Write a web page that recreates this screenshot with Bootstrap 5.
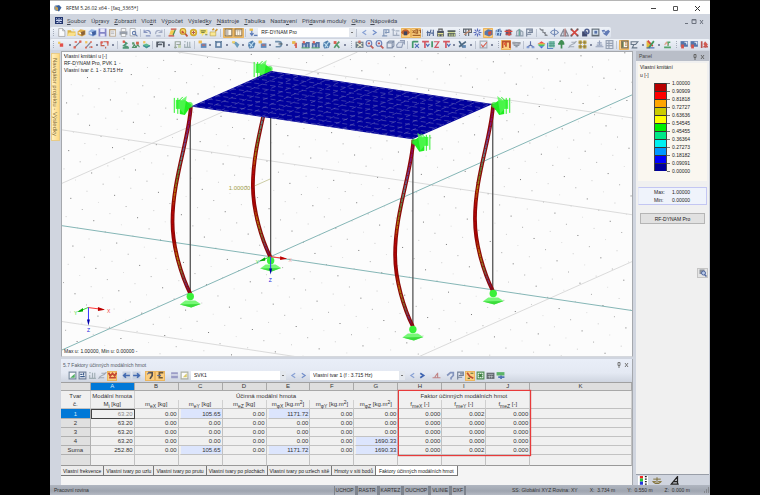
<!DOCTYPE html>
<html lang="cs">
<head>
  <meta charset="UTF-8">
  <meta name="viewport" content="width=device-width, initial-scale=1">
  <title>RFEM 5.26.02 x64 - [faq_3365*]</title>
  <link href="https://cdn.jsdelivr.net/npm/bootstrap@5.3.0/dist/css/bootstrap.min.css" rel="stylesheet">
  <style>
    body { background: #000; font: 5px/8px "Liberation Sans", Arial, sans-serif; color: #222; }
    button, select { font: inherit; color: inherit; padding: 0; border: 0; background: none; }
    svg { display: block; }
    .app { margin: 0 50px; background: #d0d5df; }
    .titlebar { height: 14px; background: #fff; border-top: 1px solid #b5b5b5; font-family: "Open Sans", sans-serif; }
    .titlebar button { width: 10px; height: 10px; }
    .menubar { height: 13px; padding: 0 5px; }
    .menubar a { color: #444a55; font-size: 6px; font-family: Roboto, sans-serif; }
    .menubar nav { gap: 5px; }
    .toolbar { height: 12px; }
    .toolbar-strip { background: linear-gradient(#eff3f9, #d9dfea); border-radius: 2px; height: 11px; }
    .strip-main { width: 85%; }
    .tool { flex: 10 1 0; min-width: 0; height: 10px; border-radius: 1px; }
    .tool svg, .dock-tool svg { width: 9px; height: 9px; margin: auto; opacity: .85; }
    .tool-on { background: #fbce80; box-shadow: inset 0 0 0 1px #ebb55e; }
    .tool-dd { flex: 6 1 0; min-width: 0; }
    .tool-dd::after { content: ""; display: block; width: 2px; height: 2px; margin: auto; background: #8189a0; }
    .tool-sep { flex: 4 1 0; height: 8px; background: linear-gradient(90deg, transparent 1px, #bcc3d0 1px, #bcc3d0 2px, transparent 2px); }
    .tool-grip { flex: 6 1 0; height: 7px; background: repeating-linear-gradient(#a5acba 0 1px, transparent 1px 2px) 3px 0 / 1px 100% no-repeat; }
    .combo { height: 9px; background: #fff; position: relative; }
    .combo select { appearance: none; width: 100%; height: 9px; padding-left: 3px; line-height: 9px; display: block; }
    .combo::after { content: ""; position: absolute; right: 0; top: 0; width: 6px; height: 9px; background: linear-gradient(#777, #777) 2px 4px / 2px 1px no-repeat #e4e8ee; pointer-events: none; }
    .toolbar .combo { flex: 94 1 0; }
    .rail { width: 11px; }
    .rail button { width: 9px; height: 88px; margin: 2px 0 0 1px; writing-mode: vertical-rl; font-size: 6px; line-height: 9px; color: #806a3a; background: linear-gradient(90deg, #fff0c0, #ffd980); border: 1px solid #e8cc88; }
    .view { background: #fcfcfc; border: 1px solid #a5a8ad; border-bottom-color: #d5d8dd; position: relative; }
    .view-caption { position: absolute; left: 2px; top: 1px; line-height: 7px; }
    .view-limits { position: absolute; left: 2px; bottom: 1px; }
    .side { width: 74px; margin-left: 3px; background: #f0f0f0; border-right: 1px solid #c5cad5; }
    .side-head { height: 10px; background: #b9bec8; padding: 0 3px; color: #444; }
    .side-scale { background: #faf7f0; margin: 2px; padding: 0 2px 3px 2px; height: 118px; }
    .swatches { width: 13px; margin: 4px 0 4px 14px; border: 1px solid #444; border-width: 0 1px; }
    .swatches div { height: 8px; border-top: 1px solid #333; }
    .ticks div { height: 8px; padding-left: 5px; background: linear-gradient(#777, #777) 0 4px / 3px 1px no-repeat; }
    .side-limits { background: #eff3fb; border: 1px solid #c3c6f2; border-left-color: #e5e8f5; margin: 4px 2px 0; height: 18px; padding-left: 15px; }
    .side-limits span { width: 18px; }
    .side .side-action { background: #e1e1e1; border: 1px solid #b5b5b5; height: 11px; margin: 8px 4px 0; }
    .side .side-zoom { width: 11px; height: 10px; margin: 44px 1px 0 auto; background: #e4e4e4; border: 1px solid #c5c5c5; }
    .side-zoom svg { width: 8px; height: 8px; margin: auto; }
    .side-tabs { height: 11px; background: #d0d5df; border-top: 1px solid #999ea8; gap: 4px; padding: 0 2px; }
    .side-tabs button { width: 10px; height: 9px; }
    .dock { background: #f0f0f0; margin-top: 2px; border-right: 1px solid #a5a8ad; }
    .dock-head { height: 24px; background: linear-gradient(#e9eef8, #e4e9f3 60%, #cfd5e0); padding: 0 2px; color: #555b66; border-bottom: 1px solid #a0a0a0; }
    .dock-title { font-size: 5px; height: 11px; }
    .dock-tools { height: 11px; }
    .dock-tool { width: 10px; height: 10px; }
    .dock-gap { width: 4px; }
    .dock-tools .combo { width: 95px; margin: 0 2px; color: #222; }
    .modal-grid { table-layout: fixed; --bs-table-bg: transparent; color: #333; font-size: 6px; line-height: 8px; border-collapse: separate; border-spacing: 0; }
    .modal-grid > :not(caption) > * > * { padding: 0 1px; height: 9px; border: 0 solid #c2c2c2; border-width: 0 1px 1px 0; color: inherit; font-weight: normal; text-align: right; white-space: nowrap; box-shadow: none; vertical-align: middle; }
    .modal-grid > thead > tr > * { text-align: center; overflow: visible; }
    .modal-grid > thead > .letters > * { height: 8px; line-height: 7px; background: #dedede; border-color: #a8a8a8; }
    .modal-grid > thead > .heads > * { border-bottom: 0; background: #f0f0f0; border-color: #d0d0d0; }
    .modal-grid > thead > .units > * { border-bottom: 1px solid #c0c0c0; }
    .modal-grid > tbody > tr > th { text-align: center; background: #e0e0e0; border-color: #b0b0b0; }
    .modal-grid > thead > tr > .picked, .modal-grid > tbody > tr > .picked { background: #0078d7; color: #d5e9fa; }
    .modal-grid > tbody > tr > .cursor { border: 1px solid #444; color: #888; }
    .modal-grid > tbody > tr > .hit { background: #dce5fd; border-left: 2px solid #f0f0f0; }
    .modal-grid > tbody > .blank > * { height: 11px; border-bottom-color: #999; }
    .modal-grid sub, .modal-grid sup { font-size: 5px; line-height: 0; }
    .callout { position: absolute; left: 59%; width: 23.3%; top: 7px; height: 66px; border: 1px solid #e83a3a; box-shadow: 0 0 1px #e83a3a; pointer-events: none; }
    .sheet-tabs { height: 19px; background: #f4f4f4; }
    .sheet-tabs button { height: 10px; padding: 0 2px; border-right: 1px solid #777; border-bottom: 1px solid #777; background: #ececec; white-space: nowrap; }
    .sheet-tabs .current { background: #fff; padding: 0 3px; }
    .statusbar { height: 10px; background: linear-gradient(#b0b6c0, #9fa5b0 60%, #b5bac4); color: #333; }
    .statusbar button { padding: 0 1px; border: 1px solid #7d838d; border-width: 0 2px 0 1px; font-size: 5px; height: 9px; }
    .status-place { width: 30%; margin-left: 46px; white-space: nowrap; }
  </style>
</head>
<body>
  <div class="app d-flex flex-column min-vh-100">

    <header>
      <div class="titlebar d-flex align-items-center">
        <svg class="ms-1 me-1" width="8" height="8" viewBox="0 0 16 16"><circle cx="6" cy="8" r="6" fill="#8aa0bd"/><path d="M3 6l7-4 5 5-5 8-6-3z" fill="#365f9c"/><path d="M2 5l6 2v7l-5-3z" fill="#c9a152"/></svg>
        <span>RFEM 5.26.02 x64 - [faq_3365*]</span>
        <div class="ms-auto d-flex gap-2 me-1 pe-1">
          <button aria-label="Minimalizovat" class="me-1"><svg viewBox="0 0 10 10"><path d="M3 5.500h5" stroke="#444"/></svg></button>
          <button aria-label="Maximalizovat" class="me-1"><svg viewBox="0 0 10 10"><path d="M3.500 3.500h4v4h-4z" fill="none" stroke="#555"/></svg></button>
          <button aria-label="Zavřít"><svg viewBox="0 0 10 10"><path d="M3 3l5 5M8 3l-5 5" stroke="#333"/></svg></button>
        </div>
      </div>
      <div class="menubar d-flex align-items-center">
        <svg class="me-1" width="8" height="7" viewBox="0 0 16 14"><rect width="16" height="14" fill="#23366f"/><path d="M2 7h12M8 2v10M2 3l3 2M14 3l-3 2M3 11h3M10 11h3" stroke="#c7d2f0" stroke-width="2"/></svg>
        <nav class="d-flex">
          <a class="nav-link p-0" href="#"><u>S</u>oubor</a>
          <a class="nav-link p-0" href="#">Úp<u>r</u>avy</a>
          <a class="nav-link p-0" href="#"><u>Z</u>obrazit</a>
          <a class="nav-link p-0" href="#">Vlo<u>ž</u>it</a>
          <a class="nav-link p-0" href="#">V<u>ý</u>počet</a>
          <a class="nav-link p-0" href="#">Výsled<u>k</u>y</a>
          <a class="nav-link p-0" href="#"><u>N</u>ástroje</a>
          <a class="nav-link p-0" href="#"><u>T</u>abulka</a>
          <a class="nav-link p-0" href="#">Nasta<u>v</u>ení</a>
          <a class="nav-link p-0" href="#">Pří<u>d</u>avné moduly</a>
          <a class="nav-link p-0" href="#"><u>O</u>kno</a>
          <a class="nav-link p-0" href="#"><u>N</u>ápověda</a>
        </nav>
        <svg class="ms-auto" width="22" height="8" viewBox="0 0 22 8"><path d="M2 6.500h3M9 6.500v-4h4v4zM9 3h4M17 3l3 4M20 3l-3 4" fill="none" stroke="#6c727e"/></svg>
      </div>
      <div class="toolbar"><div class="toolbar-strip strip-main d-flex align-items-center" id="tools-main"></div></div>
      <div class="toolbar"><div class="toolbar-strip d-flex align-items-center" id="tools-view"></div></div>
    </header>

    <main class="d-flex flex-grow-1">
      <aside class="rail flex-shrink-0"><button>Navigátor projektu - Výsledky</button></aside>

      <div class="d-flex flex-column flex-grow-1">
        <section class="view">
          <svg id="scene" class="w-100" viewBox="62 52 571 305" role="img" aria-label="Vlastní tvar konstrukce">
            <defs>
              <linearGradient id="mode" x1="0" y1="0" x2="0" y2="1">
                <stop offset="0" stop-color="#8a0630"/><stop offset=".08" stop-color="#8b0a70"/><stop offset=".2" stop-color="#6a4a9a"/>
                <stop offset=".28" stop-color="#5d9090"/><stop offset=".37" stop-color="#63882a"/><stop offset=".46" stop-color="#bb7a00"/>
                <stop offset=".54" stop-color="#bc0404"/><stop offset=".72" stop-color="#b00000"/><stop offset=".8" stop-color="#bb7a00"/>
                <stop offset=".88" stop-color="#7c7430"/><stop offset=".95" stop-color="#703070"/><stop offset="1" stop-color="#800020"/>
              </linearGradient>
              <g id="col" fill="none">
                <path d="M190.500 107V294" stroke="#555" stroke-width="1.300"/>
                <path d="M191 107C189 140 172.700 180 172.700 222C172.700 248 182 277 190.500 294" stroke="#8c0808" stroke-width="3.800"/>
                <path d="M191 107C189 140 172.700 180 172.700 222C172.700 248 182 277 190.500 294" stroke="url(#mode)" stroke-width="1.400" stroke-dasharray="4 .6"/>
              </g>
              <g id="foot">
                <path d="M-10.500 8L-5 4H5L10.500 7.500L1 11z" fill="#77f877"/><path d="M-10.500 8L10.500 7.500L1 11z" fill="#3bdc3b"/>
                <circle r="3.700" fill="#39f039"/>
              </g>
              <g id="bearing">
                <path d="M0 0l7-5 5 1V9l-5 1z" fill="#1fee1f"/><path d="M5-9l7 5v8l-4 5z" fill="#54f754" opacity=".8"/>
                <path d="M11-5h5v9h-5z" fill="#4cf64c"/><path d="M14-7V9M17.500-7V8M9-8l4 4" stroke="#2cf22c"/>
                <circle cx="2" cy="0" r="3" fill="#2fe52f" opacity=".7"/>
              </g>
            </defs>
            <g id="dots"></g>
            <g stroke="#d2d2d2" stroke-width=".8">
              <path d="M178 52L633 118M62 130L633 215M61 184L358 52M62 322L295 357M420 357L633 262"/>
            </g>
            <path d="M62 226L633 311M62 350.500L633 95" stroke="#77adad" stroke-width=".9"/>
            <path d="M253 187l18-8" stroke="#cccca5"/>
            <use href="#col" x="80.500" y="-36"/>
            <use href="#bearing" transform="translate(272 69) scale(-1 1)"/>
            <path d="M191 106.500L271.500 71L493.500 104L413 139.500z" fill="#00009c"/>
            <g id="mesh" stroke="#7474b8" stroke-width=".5" stroke-dasharray="5 3"></g>
            <use href="#col"/><use href="#col" x="223" y="33"/><use href="#col" x="303" y="-3"/>
            <use href="#bearing" transform="translate(192 105) scale(-1 1)"/>
            <use href="#bearing" transform="translate(493 105)"/>
            <use href="#bearing" transform="translate(413 142)"/>
            <use href="#foot" x="190.500" y="297"/><use href="#foot" x="271" y="261"/>
            <use href="#foot" x="413.500" y="330"/><use href="#foot" x="494" y="294"/>
            <g id="axes">
              <path d="M88 308l16 2" stroke="#f33"/><path d="M98 307.500l7 2.700-7 1.200z" fill="#b00"/>
              <path d="M88 308l-9 4" stroke="#3d3"/><path d="M83 308.500l-6 4 6-.500z" fill="#0a0"/>
              <path d="M88.500 308v13" stroke="#33f"/><path d="M87 320h3l-1.500 6z" fill="#00a"/>
            </g>
            <use href="#axes" x="182.500" y="-51"/>
            <g font-size="5">
              <text x="107" y="313" fill="#e44">X</text><text x="74" y="315" fill="#3d3">Y</text><text x="87" y="333" fill="#22d">Z</text>
              <text x="289" y="262" fill="#e99">X</text><text x="256" y="264" fill="#3d3">Y</text><text x="269" y="282" fill="#22d">Z</text>
            </g>
            <text x="229" y="190" font-size="6" fill="#a0a04a">1.00000</text>
          </svg>
          <div class="view-caption">Vlastní kmitání u [-]<br>RF-DYNAM Pro, PVK 1<br>Vlastní tvar č. 1 - 3.715 Hz</div>
          <div class="view-limits">Max u: 1.00000, Min u: 0.00000 -</div>
        </section>

        <section class="dock flex-grow-1">
          <div class="dock-head">
            <div class="dock-title d-flex align-items-center justify-content-between">
              <span>5.7 Faktory účinných modálních hmot</span>
              <svg width="14" height="7" viewBox="0 0 14 7"><path d="M2 1.500h2v3h-2zM3 4v3M9 2l3 4M12 2l-3 4" fill="none" stroke="#777"/></svg>
            </div>
            <div class="dock-tools d-flex align-items-center" id="tools-dock"></div>
          </div>
          <div class="position-relative">
            <table class="table modal-grid mb-0">
              <colgroup>
                <col style="width:5.200%"><col span="10" style="width:7.700%"><col>
              </colgroup>
              <thead>
                <tr class="letters"><th></th><th class="picked">A</th><th>B</th><th>C</th><th>D</th><th>E</th><th>F</th><th>G</th><th>H</th><th>I</th><th>J</th><th>K</th></tr>
                <tr class="heads"><th>Tvar</th><th>Modální hmota</th><th colspan="6">Účinná modální hmota</th><th colspan="3">Faktor účinných modálních hmot</th><th></th></tr>
                <tr class="heads units">
                  <th>č.</th><th>M<sub>i</sub> [kg]</th><th>m<sub>eX</sub> [kg]</th><th>m<sub>eY</sub> [kg]</th><th>m<sub>eZ</sub> [kg]</th>
                  <th>m<sub>φX</sub> [kg.m<sup>2</sup>]</th><th>m<sub>φY</sub> [kg.m<sup>2</sup>]</th><th>m<sub>φZ</sub> [kg.m<sup>2</sup>]</th>
                  <th>f<sub>meX</sub> [-]</th><th>f<sub>meY</sub> [-]</th><th>f<sub>meZ</sub> [-]</th><th></th>
                </tr>
              </thead>
              <tbody id="modal-rows"></tbody>
            </table>
            <div class="callout"></div>
          </div>
          <div class="sheet-tabs d-flex align-items-start">
            <button>Vlastní frekvence</button><button>Vlastní tvary po uzlu</button><button>Vlastní tvary po prutu</button><button>Vlastní tvary po plochách</button><button>Vlastní tvary po uzlech sítě</button><button>Hmoty v síti bodů</button><button class="current">Faktory účinných modálních hmot</button>
          </div>
        </section>
      </div>

      <aside class="side flex-shrink-0 d-flex flex-column">
        <div class="side-head d-flex align-items-center justify-content-between">
          <span>Panel</span>
          <svg width="14" height="7" viewBox="0 0 14 7"><path d="M2 1.500h2v3h-2zM3 4v3M9 2l3 4M12 2l-3 4" fill="none" stroke="#666"/></svg>
        </div>
        <div class="side-scale">
          <div>Vlastní kmitání</div>
          <div>u [-]</div>
          <div class="d-flex"><div class="swatches" id="swatches"></div><div class="ticks" id="ticks"></div></div>
        </div>
        <div class="side-limits">
          <div class="d-flex"><span>Max:</span>1.00000</div>
          <div class="d-flex"><span>Min:</span>0.00000</div>
        </div>
        <button class="side-action">RF-DYNAM Pro</button>
        <button class="side-zoom" aria-label="Lupa"><svg viewBox="0 0 16 16"><rect x="1" y="1" width="10" height="9" fill="#8a8f98"/><circle cx="9" cy="8" r="4" fill="#b9c9e8" stroke="#5068a0" stroke-width="2"/><path d="M11 11l4 4" stroke="#5068a0" stroke-width="3"/></svg></button>
        <div class="side-tabs d-flex align-items-center mt-auto">
          <button class="bg-white" aria-label="Barevná stupnice"><svg viewBox="0 0 16 14"><path d="M3 0h5v4H3z" fill="#e22"/><path d="M3 4h5v5H3z" fill="#2c3"/><path d="M3 9h5v5H3z" fill="#23d"/><path d="M11 1h3M11 5h3M11 9h3M11 13h3" stroke="#222" stroke-width="2"/></svg></button>
          <button aria-label="Faktory"><svg viewBox="0 0 16 14"><path d="M2 5h12M8 2v10M4 12h8M1 9a3 3 0 0 0 5 0zM10 9a3 3 0 0 0 5 0z" fill="#d8bd60" stroke="#7d6d35" stroke-width="1.500"/></svg></button>
          <button class="ms-1" aria-label="Filtr"><svg viewBox="0 0 16 14"><path d="M2 13L12 1v12zM6 9h5M3 13h11" fill="#c5c8ce" stroke="#222" stroke-width="2"/></svg></button>
        </div>
      </aside>
    </main>

    <footer class="statusbar d-flex align-items-center">
      <span class="ps-1">Pracovní rovina</span>
      <div class="ms-auto d-flex">
        <button>UCHOP</button><button>RASTR</button><button>KARTEZ</button><button>OUCHOP</button><button>VLINIE</button><button>DXF</button>
      </div>
      <div class="status-place d-flex justify-content-between">
        <span>SS: Globální XYZ Rovina: XY</span><span>X: &nbsp;3.734 m</span><span>Y: &nbsp;0.550 m</span><span>Z: &nbsp;0.000 m</span>
        <svg width="8" height="8" viewBox="0 0 8 8"><path d="M6 2h1M4 4h1M6 4h1M2 6h1M4 6h1M6 6h1" stroke="#666"/></svg>
      </div>
    </footer>
  </div>

  <script src="https://cdn.jsdelivr.net/npm/bootstrap@5.3.0/dist/js/bootstrap.bundle.min.js"></script>
  <script>
    // 16x16 icon drawings: [attributes, path data] pairs
    const line = (color, w = 2) => `fill="none" stroke="${color}" stroke-width="${w}"`;
    const fill = color => `fill="${color}"`;
    const icons = {
      page: [['fill="#fff" stroke="#777"', 'M3 1h7l4 4v10H3zM10 1v4h4']],
      open: [[fill('#d9a825'), 'M1 4h6l1 2h7v8H1z'], [fill('#ffe07a'), 'M3 8h13l-3 6H1zM9 1l5 2-3 2z']],
      boxY: [[fill('#e0a52f'), 'M1 6l5-4 9 2v8l-6 3-8-3z'], [fill('#7b4c1d'), 'M7 7l7-2v6l-6 3z'], [line('#fff'), 'M3 8l4 2']],
      boxB: [[fill('#85a9df'), 'M1 6l5-4 9 2v8l-6 3-8-3z'], [fill('#254891'), 'M7 7l7-2v6l-6 3z'], [line('#fff'), 'M3 8l4 2']],
      save: [[fill('#7374bf'), 'M1 1h14v14H1z'], [fill('#e9e9fb'), 'M4 1h8v6H4zM4 10h8v5H4z']],
      paste: [[fill('#a98656'), 'M2 2h12v13H2z'], [fill('#f1f1f3'), 'M4 4h9v10H4z'], [line('#888', 1), 'M5 7h6M5 10h6']],
      print: [[fill('#8a93a2'), 'M1 6h14v6H1z'], ['fill="#fff" stroke="#777"', 'M4 1h8v5H4zM4 10h8v5H4z']],
      preview: [['fill="#fff" stroke="#777"', 'M2 1h9v13H2z'], [line('#546fa3'), 'M12 9a3 3 0 1 0-6 0 3 3 0 1 0 6 0M11 11l4 4']],
      undo: [[line('#7887b7'), 'M2 3v5h6M2 8c4-6 12-4 11 3M5 14h8']],
      redo: [[line('#98a2bd'), 'M14 3v5H8M14 8C10 2 2 4 3 11M4 14h8']],
      plane: [[line('#cc2f16'), 'M5 2h10M1 14h10'], [fill('#f8c431'), 'M5 4h8l-3 8H2z'], [line('#2f7e3c'), 'M13 3l-4 10']],
      lens: [['fill="#ffdc53" stroke="#be8c0a" stroke-width="2"', 'M2 6a5 5 0 1 0 10 0 5 5 0 1 0-10 0'], [line('#be3c1c', 3), 'M6 5v3h3M11 10l4 5']],
      ring: [['fill="#fff4b0" stroke="#d3a30d" stroke-width="3"', 'M3 8a5 5 0 1 0 10 0 5 5 0 1 0-10 0'], [line('#a43'), 'M8 5v6M5 8h6']],
      note: [[fill('#fae35b'), 'M1 2h14v8H9l-4 5v-5H1z'], [line('#6e7424'), 'M3 5h9M4 8h6M11 12h4']],
      tag: [['fill="#ffe982" stroke="#af8c21"', 'M2 7h10v7H2z'], [line('#c98d1a', 3), 'M11 6l4-4M6 4l3-3']],
      winL: [['fill="#fff" stroke="#77664b" stroke-width="2"', 'M2 2h12v12H2z'], [fill('#b8b8bf'), 'M3 3h5v10H3z']],
      winG: [['fill="#fff" stroke="#886d48" stroke-width="2"', 'M2 2h12v12H2z'], [line('#a29888', 1), 'M2 5h12M6 2v12M10 2v12']],
      load: [[line('#4669ae'), 'M5 3v9M2 9l3 4 3-4M9 13h6'], [fill('#ecb62a'), 'M1 1h6v4H1z']],
      left: [[line('#7794cf'), 'M11 4L5 8l6 4']], right: [[line('#5b7cc2'), 'M5 4l6 4-6 4']],
      rightD: [[line('#2450a8', 3), 'M4 4l6 4-6 4']],
      flag: [[line('#7189af'), 'M5 15V3h9v5H7M2 14h9M9 2v8']],
      dim: [[line('#98a4b7'), 'M4 1v12h11M1 3l6 1M8 5h7M10 8v5']],
      eye: [[fill('#b84f20'), 'M0 8c4-8 12-8 16 0-4 6-12 6-16 0z'], [fill('#202d57'), 'M5 6h6v7H5z']],
      xx: [[line('#97511c'), 'M1 4l4 5M5 4L1 9M7 3h3v6H7zM12 4h3v5M1 13h14']],
      glyph: [[line('#344e82'), 'M3 14V5M1 8h6M9 3L6 14M9 9h5M13 3v11']],
      case: [[fill('#333b47'), 'M2 5h12v10H2z'], [line('#444'), 'M5 5V2h6v3'], [line('#e4e080'), 'M3 10h10M5 12v3M11 12v3']],
      bench: [[fill('#3f4b45'), 'M1 4h14v3H1zM1 9h14v6H1z'], [line('#c9d584'), 'M2 8h12M5 10v5M9 10v5M13 10v5']],
      grid: [[line('#49515a'), 'M1 2h14v6H1zM5 2v12M10 2v12'], [line('#be7a54'), 'M2 12l11-8']],
      star: [[line('#4357b3'), 'M8 1v14M1 8h14M3 3l10 10M13 3L3 13'], [fill('#e8edf6'), 'M6 6h4v4H6z']],
      cube: [[fill('#3c68b1'), 'M1 6l6-4 8 2v8l-6 3-8-3z'], [fill('#cf3d2c'), 'M7 7l6-2v6l-5 2z']],
      cubeB: [[fill('#2b4e8f'), 'M3 4l8-3 3 5-2 8-9-1z'], [line('#a9cff1'), 'M6 2L4 14M11 2L9 14M2 8h12']],
      cubeR: [[fill('#4b3d5f'), 'M3 3h10v10H3z'], [line('#e03222'), 'M1 6h14M3 11h10M9 2v12']],
      mirror: [[line('#8493a3'), 'M3 13V6l4-3v10M10 13V4l4 3v6M1 14h14'], [line('#57a18c'), 'M8 2v12']],
      copy: [[line('#62718a'), 'M3 15V2h10v6H5M7 5h6M11 11H4']],
      chain: [[line('#73777e'), 'M2 3h5v5h4v5h4M1 1l5 4M9 9l6 5']],
      orbit: [[line('#617bad'), 'M1 8c4-6 10-6 14 0-4 5-10 5-14 0zM8 1v14']],
      tri: [[line('#777b88'), 'M1 14L7 2v12zM10 14V3l5 11z'], [line('#b65f57'), 'M9 1v14']],
      cross: [[line('#d02a20', 3), 'M2 2l12 12M14 2L2 14'], [fill('#444'), 'M1 1h3v3H1zM12 1h3v3h-3zM1 12h3v3H1zM12 12h3v3h-3z']],
      ball: [[fill('#242e58'), 'M2 6h9v9H2z'], [line('#3b4d83', 3), 'M7 6c0-5 7-5 7 0s-7 5-7 0']],
      frame: [[fill('#4b5560'), 'M1 1h14v14H1z'], [fill('#d6e4f2'), 'M3 3h10v9H3z'], [fill('#3f5e9c'), 'M6 5h5v5H6z']],
      heart: [[fill('#4d69ac'), 'M1 4l5-1 2 3 5-3 3 3-6 8-5-3z'], [fill('#c5d5f2'), 'M4 6h3v3H4z']],
      node: [[fill('#e3352d'), 'M5 6h6v6H5z'], [fill('#f5c13c'), 'M2 3h4v4H2z']],
      rod: [[line('#616b7c'), 'M2 14L14 2'], [fill('#e04a36'), 'M1 11h4v4H1zM11 1h4v4h-4zM3 2h4v3H3z']],
      rods: [[line('#778', 2), 'M3 14L12 4M9 13l5-1'], [fill('#de5138'), 'M2 12h3v3H2zM11 2h3v3h-3zM12 11h3v3h-3z'], [fill('#f3be42'), 'M2 2h4v4H2z']],
      curve: [[line('#bd4931'), 'M2 4v6h6M6 3h8v7M10 12v3'], [fill('#de4038'), 'M1 2h4v4H1zM12 2h3v4h-3z']],
      support: [[line('#34895d', 3), 'M4 2l6 4-5 4 8 3M3 14h11'], [fill('#e83d2c'), 'M3 1h4v4H3z']],
      supports: [[line('#37844e'), 'M3 13l3-5 3 5zM9 13l3-5 3 5'], [fill('#3f8b54'), 'M2 4h4v4H2z'], [fill('#ce4b2d'), 'M9 3h5v5H9z']],
      surface: [[fill('#46b67e'), 'M1 9l7-3 7 4-7 5z'], [fill('#f3be42'), 'M2 2h4v4H2z'], [line('#247c8a'), 'M2 10l6 3 6-3']],
      beam: [[line('#3c4450', 3), 'M2 13V4h12v9M2 8h9'], [fill('#8a949f'), 'M5 2h6v4H5z']],
      stand: [[line('#8c9a8d'), 'M4 15V3h9v5H6M2 13h5'], [fill('#bed29b'), 'M9 9h5v5H9z']],
      dots: [[line('#97a6ac'), 'M2 3h3M8 3v10M12 3v10M3 7v6M2 13h12']],
      layers: [[fill('#497bb4'), 'M5 6h10v8H5z'], [fill('#edb43f'), 'M1 1h6v5H1z'], [line('#cd5140'), 'M7 9h6']],
      solid: [[fill('#52759c'), 'M2 2h12v12H2z'], [fill('#e9eff7'), 'M5 5h6v6H5z'], [line('#25435c', 1), 'M2 2l4 3M14 2l-3 3']],
      shell: [[fill('#578fb4'), 'M1 4l8-1 6 5-4 6-4-6z'], [fill('#efcc4e'), 'M2 2h5v4H2z']],
      globe: [[fill('#376da2'), 'M3 4l7-3 5 5-3 8-8 1-2-5z'], [line('#b5daef'), 'M4 5l7 8M12 3L5 13']],
      hook: [[line('#5b7fa0', 3), 'M2 3h6c7 0 7 9 0 9H3'], [line('#38474d'), 'M8 7h7']],
      people: [[line('#3d5e99', 3), 'M3 14V7h5v7M10 14V5h4v9'], [fill('#e0513d'), 'M3 2h4v4H3z'], [line('#4aa05f'), 'M1 14h14']],
      node2: [[fill('#e9ae2b'), 'M2 2h6v5H2z'], [line('#d24634', 3), 'M9 5v9M6 9h4']],
      runner: [[line('#3f8f56', 3), 'M4 14l4-6 5 6M8 8l5-5'], [fill('#d74633'), 'M3 2h5v5H3z']],
      nodes: [[fill('#536574'), 'M1 3h14v11H1z'], [line('#f2efcf'), 'M3 5l10 7M13 5L4 13'], [fill('#d4563f'), 'M6 1h4v4H6z']],
      zoom: [['fill="#e1e8f8" stroke="#546dac" stroke-width="2"', 'M2 6a5 5 0 1 0 10 0 5 5 0 1 0-10 0'], [line('#be453c', 3), 'M10 10l5 5M5 6h4']],
      wire: [[line('#71819d'), 'M2 5h9v9H2zM5 2h9v9M2 5l3-3M11 5l3-3M11 14l3-3']],
      iso: [['fill="#dae1ee" stroke="#8693ae" stroke-width="2"', 'M1 9l4-5h8l-3 9H2zM7 1h8v7']],
      axX: [[line('#278a52', 3), 'M3 2v12M3 3h10'], [line('#3459ad'), 'M7 7l7 7M14 7l-7 7']],
      axY: [[line('#d03e4a', 3), 'M2 3h12M7 3v11'], [line('#3459ad'), 'M9 7l3 4 3-4']],
      axZ: [[line('#278a52', 3), 'M2 2v11'], [line('#d03e4a'), 'M5 3h9L7 13h7']],
      slope: [[line('#32536f', 3), 'M2 2l7 11M2 12L14 3'], [fill('#4a78a8'), 'M8 9h6v5H8z']],
      check: [[line('#9ba4ae'), 'M2 2h12v12H2z'], [line('#d3432e'), 'M4 8l3 4 7-8']],
      result: [[line('#b03b21', 3), 'M1 14V3h13v11M7 3v9'], [fill('#e6522b'), 'M3 5h4v4H3z']],
      diag: [[line('#636e78'), 'M1 5h14M3 9h10M6 12h4'], [fill('#90949b'), 'M1 3h5v5H1zM10 4h5v4h-5z']],
      triad: [[line('#485c9c'), 'M8 2v7M8 9l-6 4M8 9l6 4'], [line('#7192d3', 3), 'M1 13h5M10 13h5']],
      rainbow: [[fill('#e33'), 'M8 2l7 5H1z'], [fill('#eec52b'), 'M3 6h10v3H3z'], [fill('#2fba5a'), 'M1 8h14l-3 3H4z'], [fill('#2756cf'), 'M4 11h8l-4 4z']],
      mesh: [[fill('#6fbda5'), 'M3 2h11v11H3z'], [line('#287f6a', 1), 'M3 6h11M3 10h11M7 2v11M11 2v11'], [line('#4678bc'), 'M1 5v10h10']],
      arrow: [[line('#247e37', 3), 'M8 2v13M2 7h11M4 5l4-4 4 4']],
      curveG: [[line('#97a0ad'), 'M1 14C5 4 8 12 15 2M3 12h8M6 4h8']],
      tiles: [[fill('#c7a732'), 'M1 1h6v6H1zM9 1h6v6H9zM1 9h6v6H1zM9 9h6v6H9z'], [line('#635727', 1), 'M1 4h14M1 12h14M4 1v14M12 1v14']],
      level: [[line('#8896b4'), 'M8 1v8M4 5h8M1 12h14M3 9h10']],
      sheet: [['fill="#e2e7ef" stroke="#8a96aa" stroke-width="2"', 'M2 1h12v14H2zM2 6h12M2 10h12M7 1v14']],
      legend: [['fill="#fff" stroke="#655b49" stroke-width="2"', 'M3 2h11v12H3z'], [line('#536f48', 3), 'M5 3v10'], [line('#b57437'), 'M9 5h3M9 9h3']],
      roll: [['fill="#e3e6ec" stroke="#536477" stroke-width="2"', 'M2 3h12l-4 5H2zM7 8l-3 6h9']],
      palette: [[fill('#e3b41e'), 'M1 1l9 7-5 7H1z'], [line('#d12c24', 3), 'M3 1l9 10'], [line('#248b43', 3), 'M14 2L5 14'], [line('#2756aa'), 'M1 14h14']],
      signal: [[line('#3c9a54', 3), 'M2 13h12M9 10V4h4'], [line('#df9276'), 'M3 9l3-5 3 5']],
      screen: [[fill('#3d629e'), 'M1 2h13v10H1z'], [line('#e5f0fb'), 'M8 4h4v4'], [fill('#d33e34'), 'M2 8h5v7H2z']],
      screenR: [[line('#b13b35', 3), 'M3 2v12M6 12h8'], [fill('#cf4338'), 'M9 2l5 6-4 6-4-7z']],
      excel: [['fill="#dff2dd" stroke="#36803a" stroke-width="2"', 'M2 2h12v12H2z'], [line('#25702b', 3), 'M5 5l6 6M11 5l-6 6']],
      chart: [['fill="#fff" stroke="#687d92" stroke-width="2"', 'M2 2h12v12H2z'], [fill('#36a549'), 'M4 12l8-7v7z']],
      sort: [['fill="#f5f7fb" stroke="#60728e" stroke-width="2"', 'M2 2h12v12H2z'], [line('#1d427a'), 'M4 6h4M4 10h8M10 3v5']],
      waves: [[line('#bb3127', 3), 'M1 3l3 6 4-5 4 5 3-6M2 12h12']],
      arrL: [[fill('#c5cfdf'), 'M1 1h14v14H1z'], [line('#2856a7', 3), 'M14 8H4M7 4L3 8l4 4']],
      arrR: [[fill('#c5cfdf'), 'M1 1h14v14H1z'], [line('#2856a7', 3), 'M2 8h10M9 4l4 4-4 4']],
      turn: [[line('#393c48', 3), 'M4 3h7v5l-4 6'], [line('#4a5f9c'), 'M2 6l4-4']],
      turnC: [[line('#59462a', 3), 'M13 3H6v9h6'], [line('#4a5f9c'), 'M2 8h7']],
      stack: [[fill('#9091c0'), 'M2 2h12v4H2zM2 8h12v5H2z'], [line('#fff', 1), 'M3 7h10']],
      marker: [['fill="#fff" stroke="#a4a896" stroke-width="2"', 'M2 2h12v12H2z'], [fill('#dac652'), 'M5 11l7-7v7z']],
      cut: [[line('#bc7474'), 'M1 12h14M5 11l4-6M10 3v9']],
      funnel: [[line('#7386b5', 3), 'M2 8l6-5h5v5l-4 4v3']],
      pen: [[line('#b33727', 3), 'M2 3l5 7 6 3'], [line('#45602a'), 'M8 4h5M3 13h4']],
      calc: [[fill('#4b5057'), 'M1 3h14v11H1z'], [line('#d3d7db', 1), 'M3 6h10M3 10h10M6 8v5M10 8v5']],
      export: [[fill('#45ac50'), 'M1 2h14v6H1z'], [line('#3960aa', 3), 'M4 11h11M9 8v6']]
    };

    const drawIcon = name => `<svg viewBox="0 0 16 16" aria-hidden="true">${icons[name].map(([attrs, d]) => `<path ${attrs} d="${d}"/>`).join('')}</svg>`;
    const combo = (label, text) => `<div class="combo"><select aria-label="${label}"><option>${text}</option></select></div>`;

    // "|" separator, ":" grip, "." drop-down arrow, "*name" pressed tool, "[]" combo box
    function buildTools(id, list, toolClass, comboTexts = []) {
      const html = list.split(' ').map(item => {
        if (item === '|') return toolClass === 'tool' ? '<span class="tool-sep"></span>' : '<span class="dock-gap"></span>';
        if (item === ':') return '<span class="tool-grip"></span>';
        if (item === '.') return '<span class="tool-dd"></span>';
        if (item === '[]') return combo(...comboTexts.shift());
        const name = item.replace('*', '');
        return `<button class="${toolClass}${item[0] === '*' ? ' tool-on' : ''}" aria-label="${name}">${drawIcon(name)}</button>`;
      }).join('');
      document.getElementById(id).innerHTML = html;
    }

    buildTools('tools-main', ': page open boxY boxB save paste print preview | undo redo | plane lens ring note tag | *winL *winG | load [] | left right flag dim *eye *xx | glyph case bench : grid star *cube cubeB cubeR mirror copy | chain orbit tri cross ball frame heart',
      'tool', [['Modul', 'RF-DYNAM Pro']]);
    buildTools('tools-view', ': node . rod rods . curve . | support supports surface | beam . stand dots | layers . solid . shell . globe layers . hook . node2 people people globe runner . : nodes zoom zoom wire iso | axX axY axZ axY . slope . | check . : *result diag | triad rainbow mesh arrow curveG tiles . level sheet | *legend roll . palette . signal : screen screen screenR',
      'tool');
    buildTools('tools-dock', '| chart sort dots curveG *waves | arrL arrR | *turn *turnC | stack marker [] left right [] left rightD | cut | funnel copy *pen excel calc export',
      'dock-tool', [['Zatěžovací stav', 'SVK1'], ['Vlastní tvar', 'Vlastní tvar 1 (f : 3.715 Hz)']]);

    // result table
    const rows = [
      ['1', '63.20', '0.00', '105.65', '0.00', '1171.72', '0.00', '0.00', '0.000', '0.002', '0.000'],
      ['2', '63.20', '0.00', '0.00', '0.00', '0.00', '0.00', '0.00', '0.000', '0.000', '0.000'],
      ['3', '63.20', '0.00', '0.00', '0.00', '0.00', '0.00', '0.00', '0.000', '0.000', '0.000'],
      ['4', '63.20', '0.00', '0.00', '0.00', '0.00', '0.00', '1690.33', '0.000', '0.000', '0.000'],
      ['Suma', '252.80', '0.00', '105.65', '0.00', '1171.72', '0.00', '1690.33', '0.000', '0.002', '0.000']
    ];
    document.getElementById('modal-rows').innerHTML = rows.map((row, r) => {
      const cells = row.slice(1).map((v, c) => {
        const cls = r === 0 && c === 0 ? 'cursor' : c > 0 && parseFloat(v) > 1 ? 'hit' : '';
        return `<td class="${cls}">${v}</td>`;
      }).join('');
      return `<tr><th class="${r === 0 ? 'picked' : ''}">${row[0]}</th>${cells}<td></td></tr>`;
    }).join('') + `<tr class="blank"><th></th>${'<td></td>'.repeat(11)}</tr>`;

    // colour scale
    const scale = ['#b80000', '#ff0000', '#ffa500', '#cccc00', '#ffff00', '#00f000', '#00e888', '#00f0f0', '#0098ff', '#0000ff', '#00009c'];
    document.getElementById('swatches').innerHTML = scale.map(c => `<div style="background:${c}"></div>`).join('');
    document.getElementById('ticks').innerHTML = ['1.00000', '0.90909', '0.81818', '0.72727', '0.63636', '0.54545', '0.45455', '0.36364', '0.27273', '0.18182', '0.09091', '0.00000']
      .map(t => `<div>${t}</div>`).join('');

    // work plane raster
    let dots = '';
    for (let i = -30; i < 20; i++) {
      for (let j = -40; j < 40; j++) {
        const x = 583 + i * 27.7 + j * 16.2;
        const y = 217 + i * 4.1 - j * 7.1;
        if (x < 62 || x > 633 || y < 52 || y > 357) continue;
        const shade = ['#ddd', '#aaa', '#ccc', '#777'][Math.abs(i * 3 + j * 5) % 4];
        dots += `<rect x="${x.toFixed(1)}" y="${y.toFixed(1)}" width="1" height="1" fill="${shade}"/>`;
      }
    }
    document.getElementById('dots').innerHTML = dots;

    // plate mesh, from the left corner along both edges
    let mesh = '';
    for (let k = 0; k <= 10; k++) {
      const t = 0.02 + k * 0.096;
      mesh += `<path d="M${191 + 80.5 * t} ${106.5 - 35.5 * t}l222 33"/>`;
    }
    for (let k = 0; k <= 16; k++) {
      const t = 0.01 + k * 0.06125;
      mesh += `<path d="M${191 + 222 * t} ${106.5 + 33 * t}l80.5 -35.5"/>`;
    }
    document.getElementById('mesh').innerHTML = mesh;
  </script>
</body>
</html>
